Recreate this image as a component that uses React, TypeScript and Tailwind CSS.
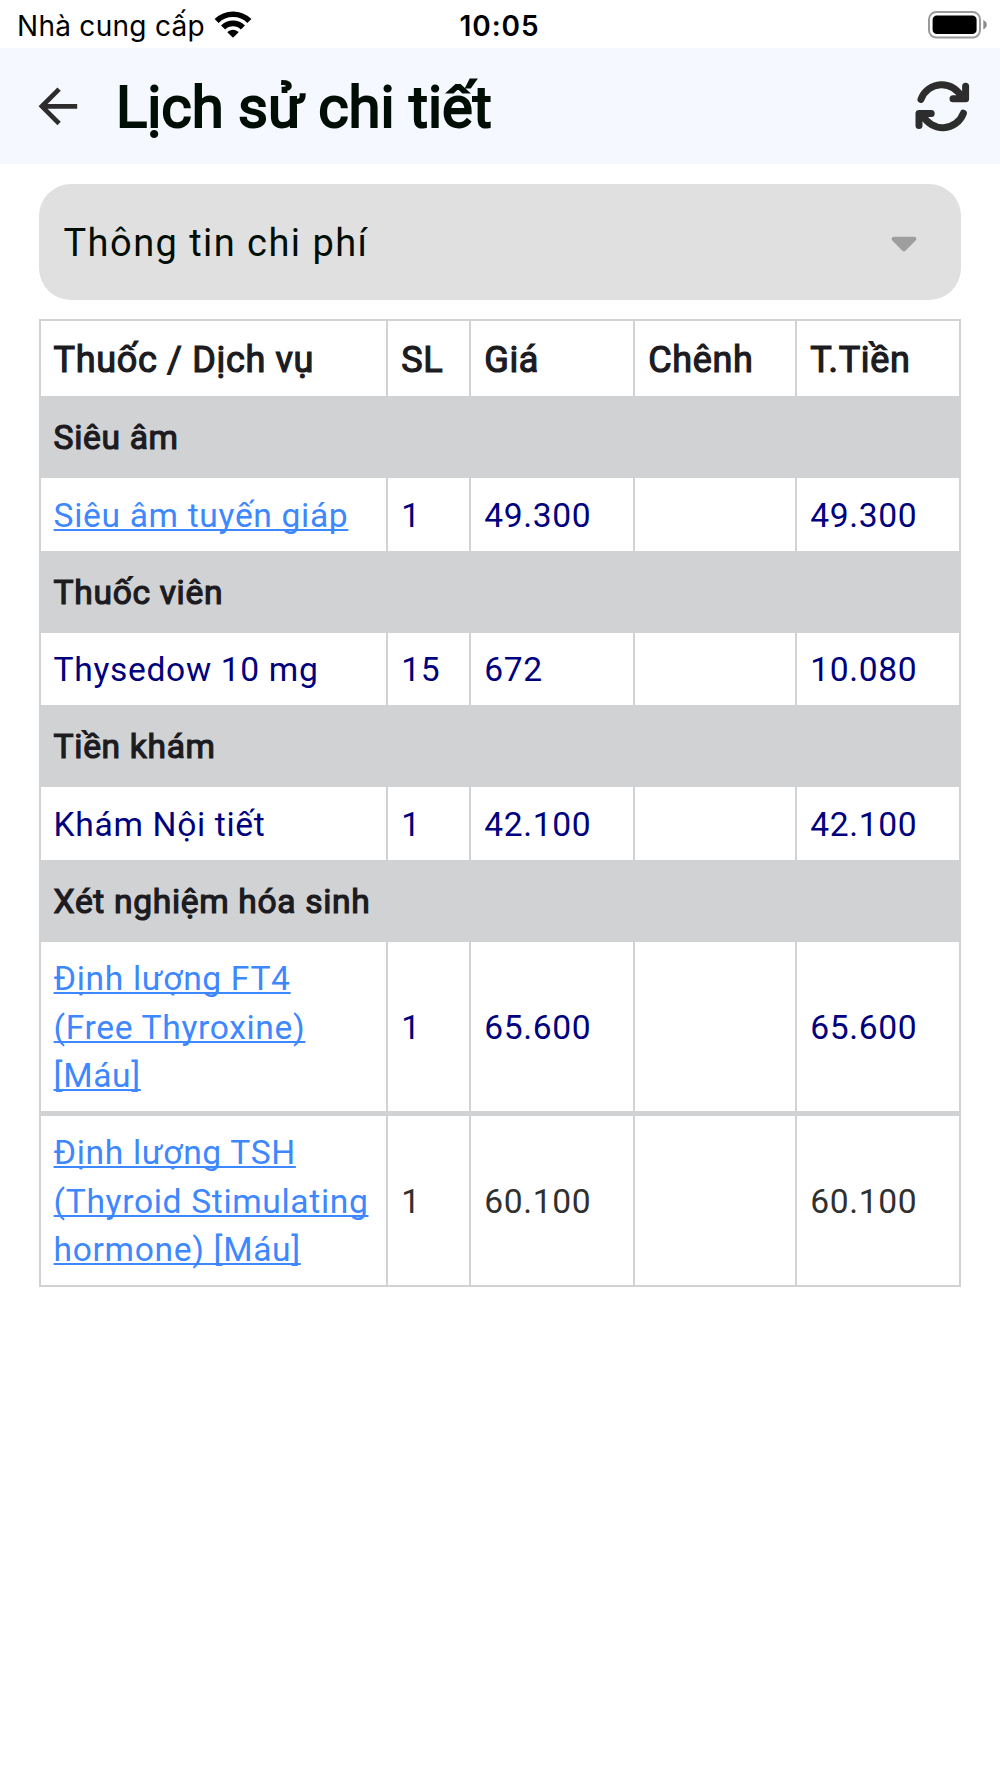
import type { ReactNode } from 'react';

type Item = {
  name: string;
  link?: boolean;
  qty: string;
  price: string;
  total: string;
  muted?: boolean;
  height: string;
};

type Group = { title: string; items: Item[] };

const groups: Group[] = [
  {
    title: 'Siêu âm',
    items: [{ name: 'Siêu âm tuyến giáp', link: true, qty: '1', price: '49.300', total: '49.300', height: 'h-[73px]' }],
  },
  {
    title: 'Thuốc viên',
    items: [{ name: 'Thysedow 10 mg', qty: '15', price: '672', total: '10.080', height: 'h-[72px]' }],
  },
  {
    title: 'Tiền khám',
    items: [{ name: 'Khám Nội tiết', qty: '1', price: '42.100', total: '42.100', height: 'h-[73px]' }],
  },
  {
    title: 'Xét nghiệm hóa sinh',
    items: [
      { name: 'Định lượng FT4 (Free Thyroxine) [Máu]', link: true, qty: '1', price: '65.600', total: '65.600', height: 'h-[169px]' },
      {
        name: 'Định lượng TSH (Thyroid Stimulating hormone) [Máu]',
        link: true,
        qty: '1',
        price: '60.100',
        total: '60.100',
        muted: true,
        height: 'h-[174px] border-t-[5px]',
      },
    ],
  },
];

const columns = 'grid grid-cols-[347px_83px_164px_162px_164px] border-[#d1d2d4]';

function Cell({ children, first = false }: { children?: ReactNode; first?: boolean }) {
  return (
    <div className={`flex items-center border-r-2 border-[#d1d2d4] pt-[3px] ${first ? 'pr-[13px] pl-[12.6px]' : 'pl-[13.2px]'}`}>
      {children}
    </div>
  );
}

function WifiIcon() {
  return (
    <svg width="38" height="30" viewBox="0 0 38 30" fill="none" stroke="#000">
      <path d="M2.6 12A23.2 23.2 0 0 1 35.4 12" strokeWidth="5.6" />
      <path d="M9.1 18.5A14 14 0 0 1 28.9 18.5" strokeWidth="5.8" />
      <path d="M13.7 22.8Q19 18.8 24.3 22.8Q24.6 23.3 24.2 23.7L19.5 28.2Q19 28.6 18.5 28.2L13.8 23.7Q13.4 23.3 13.7 22.8Z" fill="#000" stroke="none" />
    </svg>
  );
}

function BatteryIcon() {
  return (
    <svg width="60" height="28" viewBox="0 0 60 28" fill="none">
      <rect x="1" y="1" width="51" height="25.6" rx="7.4" stroke="#9a9a9a" strokeWidth="2" />
      <rect x="4.6" y="4.5" width="44" height="18.6" rx="4.2" fill="#000" />
      <path d="M55.3 9Q58.8 10.8 58.8 13.7Q58.8 16.6 55.3 18.4Z" fill="#8c8c8c" />
    </svg>
  );
}

function BackIcon() {
  return (
    <svg width="40" height="40" viewBox="0 0 40 40" fill="none" stroke="#2d2d2d" strokeWidth="4.7">
      <path d="M21.1 3.1L3.9 20.3L21.1 37.5M3.9 20.3H39.2" />
    </svg>
  );
}

function RefreshIcon() {
  return (
    <svg width="56" height="52" viewBox="0 0 56 52" fill="none" stroke="#2d2d2d" strokeWidth="7" strokeLinecap="round" strokeLinejoin="round">
      <path d="M7 19.4A22 22 0 0 1 47.8 17.6M51.6 6.2V18.8H39" />
      <path d="M49.4 33.2A22 22 0 0 1 8.8 35M5 45.6V33.4H17.2" />
    </svg>
  );
}

export default function App() {
  return (
    <div className="min-h-[1778px] w-[1000px] bg-white font-['Roboto','Noto_Sans',sans-serif]">
      <div className="grid h-12 grid-cols-3 items-center pr-3 pl-[17px] font-['Inter',sans-serif] text-[28px] leading-none text-black">
        <div className="flex items-center">
          <span className="pt-[3px] tracking-[0.28px] whitespace-nowrap">Nhà cung cấp</span>
          <span className="ml-[9px]">
            <WifiIcon />
          </span>
        </div>
        <span className="pt-[3px] pr-[6px] text-center font-semibold tracking-[0.9px]">10:05</span>
        <span className="flex justify-end pt-px">
          <BatteryIcon />
        </span>
      </div>

      <header className="flex h-[116px] items-center bg-[#f5f8fe] pr-[30.5px] pl-[38px]">
        <button type="button" aria-label="Quay lại">
          <BackIcon />
        </button>
        <h1 className="ml-[38px] flex-1 pt-[2px] text-[58px] leading-none text-[#010e06] [-webkit-text-stroke:2px_#010e06]">
          Lịch sử chi tiết
        </h1>
        <button type="button" aria-label="Tải lại">
          <RefreshIcon />
        </button>
      </header>

      <main className="px-[39px] pt-[19.5px]">
        <button
          type="button"
          className="flex h-[116px] w-full items-center justify-between rounded-[32px] bg-[#e0e0e0] pr-[44.5px] pl-[24.5px]"
        >
          <span className="pt-[3px] text-[38px] leading-none tracking-[1.45px] text-[#010e06]">Thông tin chi phí</span>
          <svg width="26" height="16" viewBox="0 0 26 16" fill="#9e9e9e" className="mt-[4px]">
            <path d="M2.5 0.8H23.3Q25.6 1 25.3 3.4Q25.2 4 24.6 4.6L14.8 14.4Q13 16.2 11.1 14.4L1.3 4.6Q0.6 4 0.6 3.4Q0.4 1 2.5 0.8Z" />
          </svg>
        </button>

        <section className="mt-[19.5px] border-y-2 border-l-2 border-[#d1d2d4]">
          <div className={`${columns} h-[75px] text-[36px] leading-none tracking-[0.667px] text-[#1c1b1f] [-webkit-text-stroke:1.2px_#1c1b1f]`}>
            <Cell first>Thuốc / Dịch vụ</Cell>
            <Cell>SL</Cell>
            <Cell>Giá</Cell>
            <Cell>Chênh</Cell>
            <Cell>T.Tiền</Cell>
          </div>
          {groups.map((group) => (
            <div key={group.title}>
              <div className="flex h-[82px] items-center bg-[#d1d2d4] pt-px pl-[12.6px] text-[33.6px] leading-none tracking-[0.667px] text-[#1c1b1f] [-webkit-text-stroke:1.2px_#1c1b1f]">
                {group.title}
              </div>
              {group.items.map((item) => (
                <div
                  key={item.name}
                  className={`${columns} ${item.height} ${item.muted ? 'text-[#303030]' : 'text-[#00007f]'} text-[33.6px] leading-[48.4px] tracking-[0.667px]`}
                >
                  <Cell first>
                    {item.link ? (
                      <a className="text-[#3d87ff] underline decoration-[1.7px] underline-offset-[1.5px] [text-decoration-skip-ink:none]">
                        {item.name}
                      </a>
                    ) : (
                      item.name
                    )}
                  </Cell>
                  <Cell>{item.qty}</Cell>
                  <Cell>{item.price}</Cell>
                  <Cell />
                  <Cell>{item.total}</Cell>
                </div>
              ))}
            </div>
          ))}
        </section>
      </main>
    </div>
  );
}
